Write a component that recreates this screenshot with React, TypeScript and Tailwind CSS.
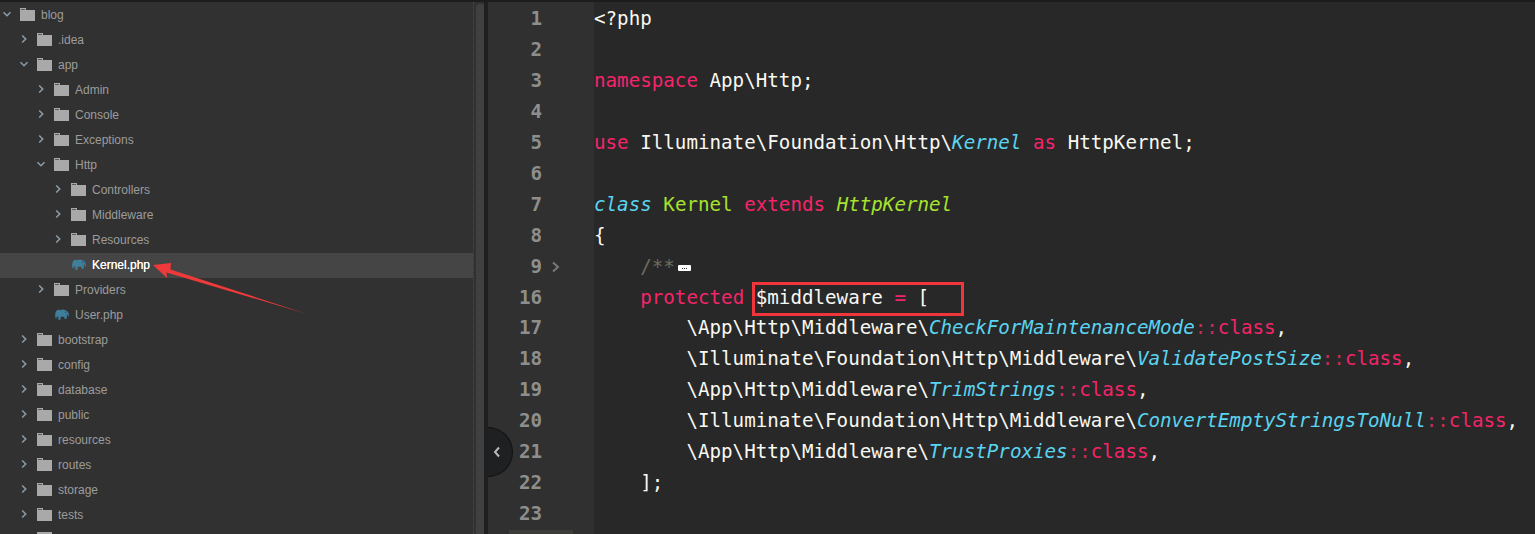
import React from 'react';

type Row = { name: string; level: number; kind: 'open' | 'closed' | 'file'; selected?: boolean };

const rows: Row[] = [
  { name: 'blog', level: 0, kind: 'open' },
  { name: '.idea', level: 1, kind: 'closed' },
  { name: 'app', level: 1, kind: 'open' },
  { name: 'Admin', level: 2, kind: 'closed' },
  { name: 'Console', level: 2, kind: 'closed' },
  { name: 'Exceptions', level: 2, kind: 'closed' },
  { name: 'Http', level: 2, kind: 'open' },
  { name: 'Controllers', level: 3, kind: 'closed' },
  { name: 'Middleware', level: 3, kind: 'closed' },
  { name: 'Resources', level: 3, kind: 'closed' },
  { name: 'Kernel.php', level: 3, kind: 'file', selected: true },
  { name: 'Providers', level: 2, kind: 'closed' },
  { name: 'User.php', level: 2, kind: 'file' },
  { name: 'bootstrap', level: 1, kind: 'closed' },
  { name: 'config', level: 1, kind: 'closed' },
  { name: 'database', level: 1, kind: 'closed' },
  { name: 'public', level: 1, kind: 'closed' },
  { name: 'resources', level: 1, kind: 'closed' },
  { name: 'routes', level: 1, kind: 'closed' },
  { name: 'storage', level: 1, kind: 'closed' },
  { name: 'tests', level: 1, kind: 'closed' },
];

const indents: Record<number, string> = { 0: 'pl-0', 1: 'pl-[17px]', 2: 'pl-[34px]', 3: 'pl-[51px]' };

type Token = [string, string?];

const kw = 'text-[#f5246a]';
const sep = 'text-[#c42c5a]';
const cls = 'text-[#5ad4f0] italic';
const grn = 'text-[#a6e22e]';
const itg = 'text-[#a6e22e] italic';
const cmt = 'text-[#6f6b5c]';

const lines: { no: number; tokens: Token[]; fold?: boolean; more?: boolean }[] = [
  { no: 1, tokens: [['<?php']] },
  { no: 2, tokens: [] },
  { no: 3, tokens: [['namespace', kw], [' App\\Http;']] },
  { no: 4, tokens: [] },
  { no: 5, tokens: [['use', kw], [' Illuminate\\Foundation\\Http\\'], ['Kernel', cls], [' '], ['as', kw], [' HttpKernel;']] },
  { no: 6, tokens: [] },
  { no: 7, tokens: [['class', cls], [' '], ['Kernel', grn], [' '], ['extends', kw], [' '], ['HttpKernel', itg]] },
  { no: 8, tokens: [['{']] },
  { no: 9, tokens: [['    '], ['/**', cmt]], fold: true, more: true },
  { no: 16, tokens: [['    '], ['protected', kw], [' $middleware '], ['=', kw], [' [']] },
  { no: 17, tokens: [['        \\App\\Http\\Middleware\\'], ['CheckForMaintenanceMode', cls], ['::', sep], ['class', kw], [',']] },
  { no: 18, tokens: [['        \\Illuminate\\Foundation\\Http\\Middleware\\'], ['ValidatePostSize', cls], ['::', sep], ['class', kw], [',']] },
  { no: 19, tokens: [['        \\App\\Http\\Middleware\\'], ['TrimStrings', cls], ['::', sep], ['class', kw], [',']] },
  { no: 20, tokens: [['        \\Illuminate\\Foundation\\Http\\Middleware\\'], ['ConvertEmptyStringsToNull', cls], ['::', sep], ['class', kw], [',']] },
  { no: 21, tokens: [['        \\App\\Http\\Middleware\\'], ['TrustProxies', cls], ['::', sep], ['class', kw], [',']] },
  { no: 22, tokens: [['    ];']] },
  { no: 23, tokens: [] },
];

function Chevron({ open }: { open: boolean }) {
  return (
    <svg width="10" height="10" viewBox="0 0 10 10" className="text-[#8a9aa6]" fill="none" stroke="currentColor" strokeWidth="1.6">
      {open ? <path d="M1.5 3.2 5 6.7l3.5-3.5" /> : <path d="M3.2 1.5 6.7 5 3.2 8.5" />}
    </svg>
  );
}

function Folder() {
  return (
    <svg width="15" height="13" viewBox="0 0 15 13" className="shrink-0 -translate-y-px">
      <path d="M0 0h6v2h9v11H0z" fill="#a9a9a9" />
      <path d="M1 1h4v1H1z" fill="#5a5a5a" />
    </svg>
  );
}

function Elephant() {
  return (
    <svg width="14" height="11" viewBox="0 0 15 11" className="ml-px shrink-0 -translate-y-px" fill="#3f7f9c">
      <path d="M0.5 9.5C0 7 0 3 1.5 1.5 3 0.2 5 0.3 6 1c1-.8 3.5-1.2 5 0 1.4.2 2.3 1 3 2 .8 1.300 1 3 .7 4.500h-1.200c.2-1.200 0-2.200-.7-2.800l-.3 5.300H10V8H6v3H3.500V8L2 7.500 1.800 9.500z" />
      <circle cx="11.500" cy="3" r="0.700" fill="#1f3a48" />
    </svg>
  );
}

function TreeRow({ row }: { row: Row }) {
  return (
    <div className={`flex h-[25px] shrink-0 items-center ${indents[row.level]} ${row.selected ? 'bg-[#454545]' : ''}`}>
      <span className="flex w-[20px] shrink-0 justify-start pl-[2px] -translate-y-[2px]">
        {row.kind !== 'file' && <Chevron open={row.kind === 'open'} />}
      </span>
      {row.kind === 'file' ? <Elephant /> : <Folder />}
      <span className={`ml-[6px] -translate-y-px text-[12px] ${row.selected ? 'text-white [text-shadow:0_0_0.4px_#ffffff]' : 'text-[#9c9c9c]'}`}>{row.name}</span>
    </div>
  );
}

export default function App() {
  return (
    <div className="relative flex h-[534px] w-[1535px] overflow-hidden border-t-2 border-[#1c1c1c] bg-[#282828] font-['Liberation_Sans',sans-serif]">
      {/* file tree */}
      <aside className="flex w-[473px] shrink-0 flex-col bg-[#313131] pt-px">
        {rows.map((row) => (
          <TreeRow key={row.name} row={row} />
        ))}
        <div className="ml-[37px] mt-[-1px] h-[13px] w-[15px] shrink-0 translate-y-[5px] bg-[#a9a9a9]" />
      </aside>
      {/* tree scrollbar */}
      <div className="w-[11px] shrink-0 border-l border-dotted border-[#4a4a4a] bg-[#313131] pl-px">
        <div className="ml-px mt-[2px] h-full w-[9px] rounded-t bg-[#404040]" />
      </div>
      <div className="w-[4px] shrink-0 bg-[#1f1f1f]" />

      {/* gutter */}
      <div className="relative w-[106px] shrink-0 bg-[#303030] pt-[2px] font-['DejaVu_Sans_Mono',monospace] text-[19.200px] font-bold text-[#8e8e8c]">
        {lines.map((line) => (
          <div key={line.no} className="flex h-[30.940px] items-center">
            <span className="w-[54px] text-right">{line.no}</span>
            {line.fold && (
              <svg width="10" height="12" viewBox="0 0 10 12" className="ml-[9px]" fill="none" stroke="#77797b" strokeWidth="2">
                <path d="M2 1.500 7 6l-5 4.500" />
              </svg>
            )}
          </div>
        ))}
        <div className="absolute bottom-0 left-[21px] h-[4px] w-[64px] bg-[#3c3c38]" />
      </div>

      {/* code */}
      <div className="min-w-0 flex-1 whitespace-pre pt-[2px] font-['DejaVu_Sans_Mono',monospace] text-[19.200px] text-[#f8f8f2]">
        {lines.map((line) => (
          <div key={line.no} className="flex h-[30.940px] items-center">
            <span>
              {line.tokens.map((token, i) => (
                <span key={i} className={token[1]}>
                  {token[0]}
                </span>
              ))}
            </span>
            {line.more && (
              <span className="ml-[3px] mt-[3px] flex h-[6px] w-[13px] items-center justify-center gap-px rounded-[1px] bg-white">
                <span className="size-px bg-[#333333]" />
                <span className="size-px bg-[#333333]" />
                <span className="size-px bg-[#333333]" />
              </span>
            )}
          </div>
        ))}
      </div>

      {/* sidebar collapse handle */}
      <div className="absolute left-[488px] top-[425px] flex h-[50px] w-[25px] items-center rounded-r-[25px] border border-l-0 border-[#111111] bg-[#1f2022] pl-[5px]">
        <svg width="8" height="12" viewBox="0 0 8 12" fill="none" stroke="#b9b9b9" strokeWidth="2">
          <path d="M6 1.500 2 6l4 4.500" />
        </svg>
      </div>

      {/* screenshot annotations */}
      <div className="absolute left-[752px] top-[280px] h-[34px] w-[212px] border-[3px] border-[#f0353b]" />
      <svg className="absolute left-0 top-[-2px]" width="320" height="330" viewBox="0 0 320 330">
        <path d="M153 265 171 263 170.500 269.500 307 314 166.500 272.500 167 278z" fill="#ee3a3a" />
      </svg>
    </div>
  );
}
